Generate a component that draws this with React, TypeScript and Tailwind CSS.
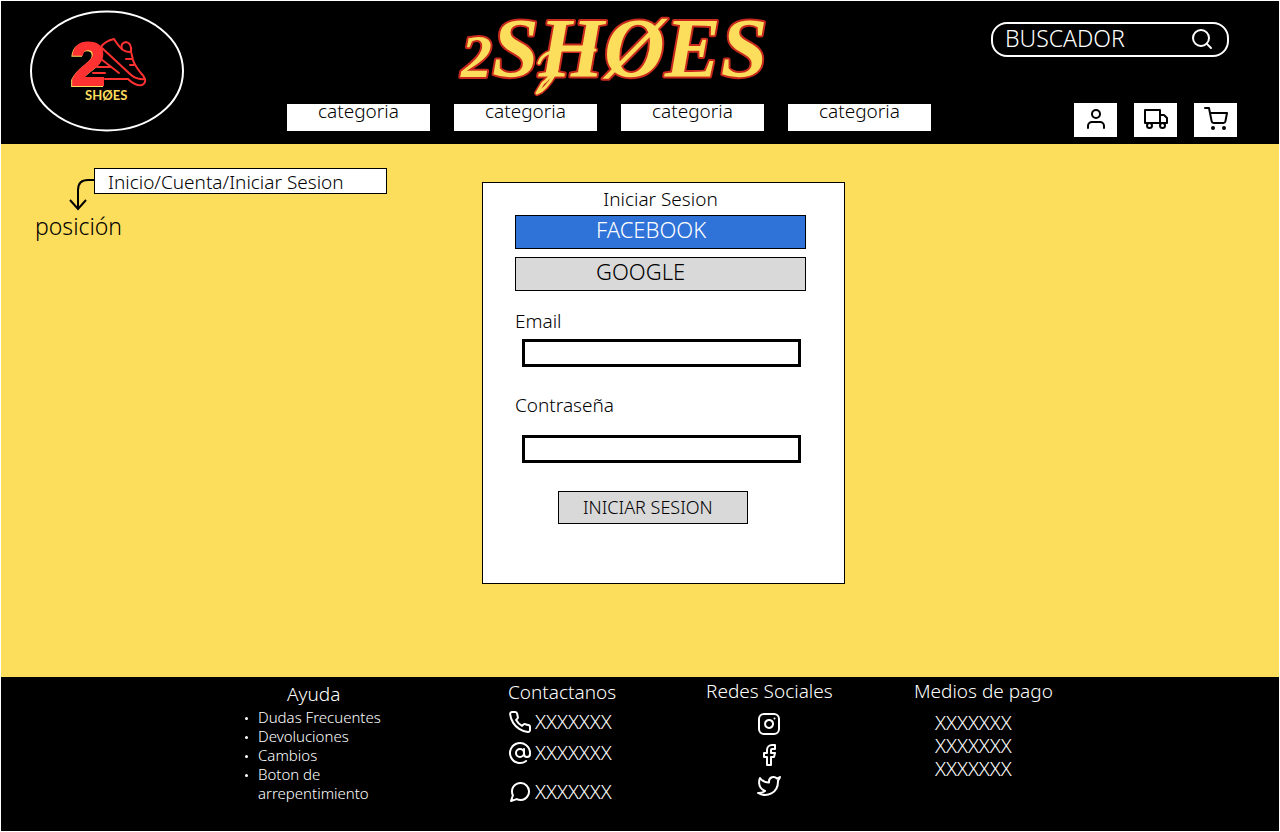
import React from "react";
import {
  FiAtSign,
  FiFacebook,
  FiInstagram,
  FiMessageCircle,
  FiPhone,
  FiSearch,
  FiShoppingCart,
  FiTruck,
  FiTwitter,
  FiUser,
} from "react-icons/fi";

const categories = ["categoria", "categoria", "categoria", "categoria"];
const helpLinks = ["Dudas Frecuentes", "Devoluciones", "Cambios", "Boton de arrepentimiento"];

function BadgeLogo() {
  return (
    <a href="#" aria-label="2 Shoes" className="block w-[156px] shrink-0">
      <svg viewBox="0 0 156 122" className="w-full">
        <ellipse cx="78" cy="61" rx="76" ry="59.5" fill="#000" stroke="#fff" strokeWidth="2" />
        <text
          x="42"
          y="75"
          fontFamily="Liberation Sans, sans-serif"
          fontWeight="700"
          fontSize="62"
          fill="#ff3131"
          stroke="#ff3131"
          strokeWidth="2"
          className="[filter:drop-shadow(-1px_1px_0_#fddd5c)]"
        >
          2
        </text>
        <g fill="none" stroke="#ff3131" strokeWidth="2" strokeLinecap="round" strokeLinejoin="round">
          <path d="M76 69H99Q103 73 106 74Q110 76 113 75Q117 73 116 69Q115 66 111 62Q105 54 104 50Q103 45 102 42Q97 42 94 40Q90 37 85 29Q76 31 72 37Q70 42 72 49L90 63" />
          <path d="M93 39Q91 33 97 32Q103 33 102 42" />
          <path d="M73 38L101 64Q107 70 116 69" />
          <path d="M97 49H103M101 55H105M68 57H82M64 63H76" />
        </g>
        <text x="56" y="90" fontFamily="Lato, sans-serif" fontWeight="700" fontSize="13" fill="#fddd5c">
          SHØES
        </text>
      </svg>
    </a>
  );
}

function Wordmark() {
  const strokes = (
    <>
      <path d="M102 68Q96 82 86 90L82 92L88 82Q94 78 98 70" />
      <path d="M84 62Q88 50 108 49H140" />
    </>
  );
  return (
    <svg viewBox="0 0 324 98" className="ml-4 h-[98px] w-[324px]" role="img" aria-label="2SHØES">
      <g fill="none" stroke="#c9281c" strokeWidth="6" strokeLinecap="round" strokeLinejoin="round">
        {strokes}
      </g>
      <text
        x="6"
        y="76"
        fontFamily="Liberation Serif, serif"
        fontStyle="italic"
        fontWeight="700"
        fontSize="84"
        fill="#fddd5c"
        stroke="#c9281c"
        strokeWidth="4"
        paintOrder="stroke"
        strokeLinejoin="round"
      >
        <tspan fontSize="62">2</tspan>
        SHØES
      </text>
      <g fill="none" stroke="#fddd5c" strokeWidth="3" strokeLinecap="round" strokeLinejoin="round">
        {strokes}
      </g>
    </svg>
  );
}

function IconButton({ label, children }: { label: string; children: React.ReactNode }) {
  return (
    <button aria-label={label} className="flex h-[34px] w-[43px] items-center justify-center bg-white pb-[2px] text-black">
      {children}
    </button>
  );
}

function Header() {
  return (
    <header className="flex h-[143px] justify-between bg-black pr-[42px] pl-7">
      <div className="pt-[9px]">
        <BadgeLogo />
      </div>
      <div className="flex flex-col items-center justify-between pb-[13px] pl-[42px]">
        <Wordmark />
        <nav className="flex gap-6">
          {categories.map((name, i) => (
            <a key={i} href="#" className="h-[27px] w-[143px] bg-white text-center leading-[14px] text-black">
              {name}
            </a>
          ))}
        </nav>
      </div>
      <div className="flex flex-col items-end justify-between pt-[21px] pb-[7px]">
        <label className="mr-2 flex h-[35px] w-[238px] items-center rounded-2xl border-2 border-white pr-[13px] pb-[2px] pl-3 text-white">
          <input
            type="text"
            aria-label="Buscador"
            placeholder="BUSCADOR"
            className="w-full min-w-0 bg-transparent text-[23px] font-light text-white outline-none placeholder:text-white"
          />
          <FiSearch size={24} className="shrink-0" />
        </label>
        <div className="flex gap-[17px]">
          <IconButton label="Cuenta">
            <FiUser size={24} />
          </IconButton>
          <IconButton label="Envios">
            <FiTruck size={24} />
          </IconButton>
          <IconButton label="Carrito">
            <FiShoppingCart size={24} />
          </IconButton>
        </div>
      </div>
    </header>
  );
}

function Breadcrumb() {
  return (
    <div className="w-[386px] shrink-0 pt-6 pl-[34px]">
      <div className="flex">
        <svg viewBox="0 0 59 44" className="h-11 w-[59px] shrink-0" fill="none" stroke="#000" strokeWidth="2">
          <path d="M59 12H53Q43 12 43 22V41M35 32L43 41L51 32" />
        </svg>
        <nav className="h-[26px] flex-1 border border-black bg-white pl-[13px] leading-[26px]">
          Inicio/Cuenta/Iniciar Sesion
        </nav>
      </div>
      <p className="text-[23px] leading-7">posición</p>
    </div>
  );
}

function LoginCard() {
  return (
    <form className="mt-[38px] flex h-[402px] w-[363px] flex-col border border-black bg-white pr-[38px] pl-8">
      <h1 className="text-center leading-8">Iniciar Sesion</h1>
      <button type="button" className="h-[34px] border border-black bg-[#2f72d8] pb-[6px] pl-20 text-left text-[22px] leading-6 text-white">
        FACEBOOK
      </button>
      <button type="button" className="mt-2 h-[34px] border border-black bg-[#d9d9d9] pb-[6px] pl-20 text-left text-[22px] leading-6">
        GOOGLE
      </button>
      <label htmlFor="email" className="mt-4 leading-7">
        Email
      </label>
      <input id="email" type="email" className="mt-1 mr-[5px] ml-[7px] h-7 border-3 border-black" />
      <label htmlFor="password" className="mt-6 leading-7">
        Contraseña
      </label>
      <input id="password" type="password" className="mt-4 mr-[5px] ml-[7px] h-7 border-3 border-black" />
      <button type="submit" className="mt-7 ml-[43px] h-[33px] w-[190px] border border-black bg-[#d9d9d9] pl-6 text-left text-[18px]">
        INICIAR SESION
      </button>
    </form>
  );
}

function Footer() {
  return (
    <footer className="flex h-[154px] bg-black pl-[242px] text-white">
      <section className="w-[265px] pt-[3px]">
        <h2 className="pl-11 leading-7">Ayuda</h2>
        <ul className="w-[144px] pl-[2px] text-[15px] leading-[19px]">
          {helpLinks.map((name) => (
            <li key={name} className="flex gap-[10px]">
              <span className="mt-[9px] size-[3px] shrink-0 rounded-full bg-white" />
              <a href="#">{name}</a>
            </li>
          ))}
        </ul>
      </section>
      <section className="w-[198px] pt-px">
        <h2 className="leading-7">Contactanos</h2>
        <ul className="text-[20px]">
          <li className="flex h-[31px] items-center gap-[3px]">
            <FiPhone size={24} />
            XXXXXXX
          </li>
          <li className="flex h-[31px] items-center gap-[3px]">
            <FiAtSign size={24} />
            XXXXXXX
          </li>
          <li className="mt-2 flex h-[31px] items-center gap-[3px]">
            <FiMessageCircle size={24} />
            XXXXXXX
          </li>
        </ul>
      </section>
      <section className="w-[208px]">
        <h2 className="leading-7">Redes Sociales</h2>
        <div className="flex w-[126px] flex-col items-center gap-[7px] pt-[7px]">
          <a href="#" aria-label="Instagram">
            <FiInstagram size={24} />
          </a>
          <a href="#" aria-label="Facebook">
            <FiFacebook size={24} />
          </a>
          <a href="#" aria-label="Twitter">
            <FiTwitter size={24} />
          </a>
        </div>
      </section>
      <section>
        <h2 className="leading-7">Medios de pago</h2>
        <ul className="pt-[6px] pl-[21px] text-[20px] leading-[23px]">
          <li>XXXXXXX</li>
          <li>XXXXXXX</li>
          <li>XXXXXXX</li>
        </ul>
      </section>
    </footer>
  );
}

export default function App() {
  return (
    <div className="flex min-h-screen flex-col bg-white p-px font-['Noto_Sans',sans-serif] text-[19px] font-light text-black">
      <Header />
      <main className="flex flex-1 bg-[#fddd5c]">
        <Breadcrumb />
        <div className="flex flex-1 pl-[95px]">
          <LoginCard />
        </div>
      </main>
      <Footer />
    </div>
  );
}
